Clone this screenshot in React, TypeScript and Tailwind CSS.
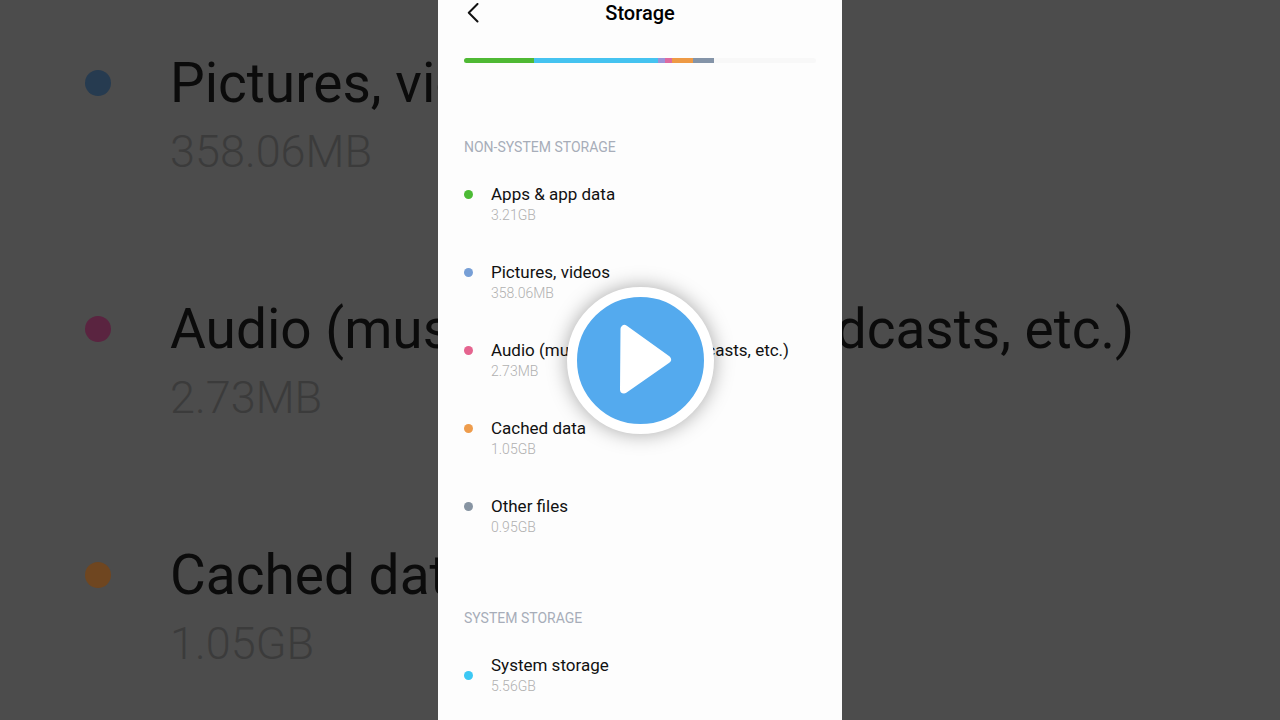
type StorageItem = {
  name: string;
  size: string;
  dot: string;
  backdropDot?: string;
};

const nonSystem: StorageItem[] = [
  { name: 'Apps & app data', size: '3.21GB', dot: 'bg-[#4cbb35]' },
  { name: 'Pictures, videos', size: '358.06MB', dot: 'bg-[#779fd6]', backdropDot: 'bg-[#263b50]' },
  { name: 'Audio (music, recording, podcasts, etc.)', size: '2.73MB', dot: 'bg-[#e5648f]', backdropDot: 'bg-[#5a2440]' },
  { name: 'Cached data', size: '1.05GB', dot: 'bg-[#ee9c4c]', backdropDot: 'bg-[#6f4620]' },
  { name: 'Other files', size: '0.95GB', dot: 'bg-[#8794a2]' },
];

const usage = [
  { percent: 20, color: 'bg-[#4fb934]' },
  { percent: 35, color: 'bg-[#45c3f0]' },
  { percent: 2, color: 'bg-[#9a93d8]' },
  { percent: 2, color: 'bg-[#dd6aa0]' },
  { percent: 6, color: 'bg-[#ee9a45]' },
  { percent: 6, color: 'bg-[#8494a8]' },
];

function SectionTitle({ children }: { children: string }) {
  return <h2 className="text-sm leading-5 text-[#a7adb9]">{children}</h2>;
}

function Backdrop() {
  return (
    <div aria-hidden="true" className="absolute inset-0 overflow-hidden pt-12 pl-[85px]">
      {nonSystem.slice(1, 4).map((item) => (
        <div key={item.name} className="flex h-[246px] gap-[59px] whitespace-nowrap">
          <span className="flex h-[70px] items-center">
            <span className={`size-[26px] rounded-full ${item.backdropDot}`} />
          </span>
          <div>
            <p className="text-[55px] leading-[70px] text-[#0b0b0b]">{item.name}</p>
            <p className="text-[45px] leading-[68px] font-light text-[#3b3b3b]">{item.size}</p>
          </div>
        </div>
      ))}
    </div>
  );
}

export default function App() {
  return (
    <div className="relative flex h-screen justify-center overflow-hidden bg-[#4c4c4c] font-['Roboto',sans-serif]">
      <Backdrop />

      {/* Phone screen */}
      <main className="relative w-full max-w-[404px] bg-[#fdfdfd] px-[26px]">
        <header className="grid h-[26px] grid-cols-[1fr_auto_1fr] items-center">
          <button type="button" aria-label="Back" className="w-5">
            <svg viewBox="0 0 20 20" className="size-5" fill="none" stroke="#111" strokeWidth="2" strokeLinecap="round" strokeLinejoin="round">
              <path d="M13.5 1 4.800 9.800l8.700 8.700" />
            </svg>
          </button>
          <h1 className="text-xl leading-[26px] font-medium text-black">Storage</h1>
        </header>

        <div className="mt-8 flex h-[5px] overflow-hidden rounded-full bg-[#f8f8f8]">
          {usage.map((part) => (
            <span key={part.color} className={part.color} style={{ width: `${part.percent}%` }} />
          ))}
        </div>

        <section className="mt-[74px]">
          <SectionTitle>NON-SYSTEM STORAGE</SectionTitle>
          <ul className="mt-[26px]">
            {nonSystem.map((item) => (
              <li key={item.name} className="flex h-[78px] gap-[18px]">
                <span className="flex h-[22px] items-center">
                  <span className={`size-[9px] rounded-full ${item.dot}`} />
                </span>
                <div>
                  <p className="text-[17px] leading-[22px] text-[#111]">{item.name}</p>
                  <p className="text-sm leading-[21px] font-light text-[#b0b0b0]">{item.size}</p>
                </div>
              </li>
            ))}
          </ul>
        </section>

        <section className="mt-[35px]">
          <SectionTitle>SYSTEM STORAGE</SectionTitle>
          <div className="mt-[26px] flex items-center gap-[18px]">
            <span className="size-[9px] rounded-full bg-[#3cc8f4]" />
            <div>
              <p className="text-[17px] leading-[22px] text-[#111]">System storage</p>
              <p className="text-sm leading-[21px] font-light text-[#b0b0b0]">5.56GB</p>
            </div>
          </div>
        </section>
      </main>

      <div className="absolute inset-0 grid place-items-center">
        <button
          type="button"
          aria-label="Play"
          className="size-[147px] rounded-full border-[10px] border-white bg-[#54aaee] shadow-[0_0_20px_rgba(0,0,0,0.35)]"
        >
          <svg viewBox="0 0 127 127" className="size-full" fill="#fff" stroke="#fff" strokeWidth="8" strokeLinejoin="round">
            <path d="M47.500 32 47 92.500 90 62.500z" />
          </svg>
        </button>
      </div>
    </div>
  );
}
